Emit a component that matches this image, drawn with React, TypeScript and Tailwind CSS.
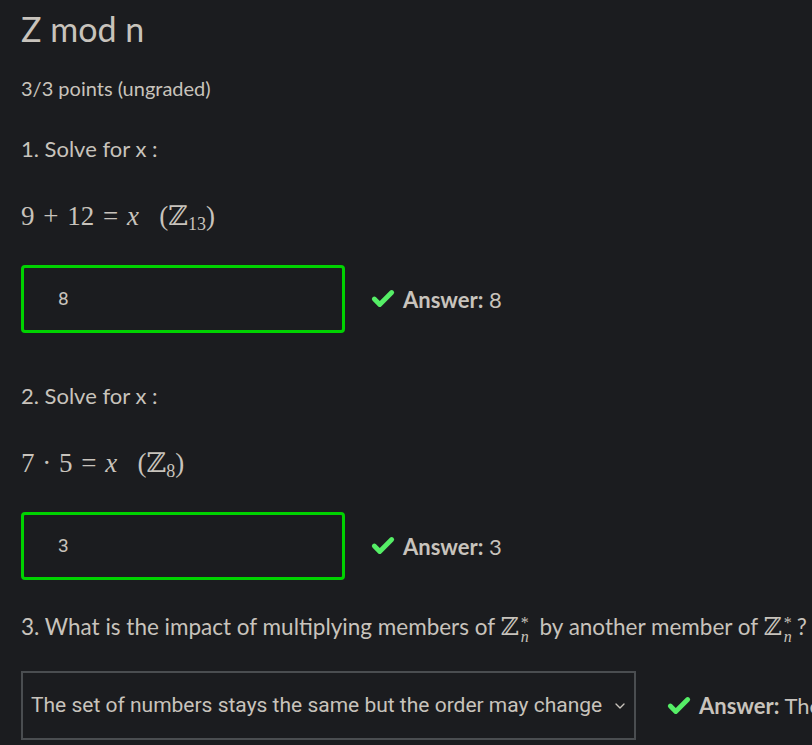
import { Check, ChevronDown } from "lucide-react";

const serif = { fontFamily: '"Liberation Serif", "DejaVu Serif", serif' };

function Zn({ sub, star }: { sub: string; star?: boolean }) {
  return (
    <span className="inline-flex items-baseline">
      <span style={{ fontFamily: '"DejaVu Serif", serif' }} className="font-light">ℤ</span>
      {star ? (
        <span className="relative ml-[2px] inline-block h-[1em] w-[13px] align-baseline text-[16px] leading-none">
          <span className="absolute -top-[4px] left-0">*</span>
          <span className="absolute top-[10px] left-0 italic">{sub}</span>
        </span>
      ) : (
        <span className="relative top-[5px] text-[18px]">{sub}</span>
      )}
    </span>
  );
}

function Answer({ value }: { value: string }) {
  return (
    <div className="flex items-center gap-[7px] text-[22px] whitespace-nowrap">
      <Check className="h-[26px] w-[26px] text-[#55ee66]" strokeWidth={4.5} />
      <span>
        <b className="font-bold">Answer:</b> {value}
      </span>
    </div>
  );
}

function NumberQuestion({ n, math, value }: { n: number; math: React.ReactNode; value: string }) {
  return (
    <div>
      <p className="text-[22px] leading-[26px]">{n}. Solve for x :</p>
      <div className="mt-[38px] text-[27px] leading-[32px]" style={serif}>
        {math}
      </div>
      <div className="mt-[30px] flex items-center gap-[25px]">
        <div className="flex h-[68px] w-[324px] items-center rounded-[4px] border-[3px] border-[#00d200] pl-[34px] text-[19px]" style={{ fontFamily: "Roboto, sans-serif" }}>
          {value}
        </div>
        <Answer value={value} />
      </div>
    </div>
  );
}

export default function App() {
  return (
    <div
      className="h-[745px] overflow-hidden bg-[#1b1c1f] pl-[21px] pt-[8px] text-[#c8c3bc]"
      style={{ fontFamily: '"Source Sans Pro", Lato, "Noto Sans", sans-serif' }}
    >
      <h1 className="text-[34px] leading-[42px]">Z mod n</h1>
      <p className="mt-[26px] text-[20px] leading-[24px]">3/3 points (ungraded)</p>
      <div className="mt-[36px]">
        <NumberQuestion
          n={1}
          value="8"
          math={
            <span className="whitespace-pre">
              9 <span className="mx-[2px]">+</span> 12 <span className="mx-[2px]">=</span> <i>x</i>{"   "}(<Zn sub="13" />)
            </span>
          }
        />
      </div>
      <div className="mt-[50px]">
        <NumberQuestion
          n={2}
          value="3"
          math={
            <span className="whitespace-pre">
              7 <span className="mx-[1px]">·</span> 5 <span className="mx-[2px]">=</span> <i>x</i>{"   "}(<Zn sub="8" />)
            </span>
          }
        />
      </div>
      <p className="mt-[34px] whitespace-nowrap text-[22.5px] leading-[26px]">
        3. What is the impact of multiplying members of{" "}
        <span className="text-[25px]" style={serif}>
          <Zn sub="n" star />
        </span>{" "}
        by another member of{" "}
        <span className="text-[25px]" style={serif}>
          <Zn sub="n" star />
        </span>
        ?
      </p>
      <div className="mt-[31px] flex items-center gap-[30px]">
        <div
          className="flex h-[69px] w-[615px] shrink-0 items-center gap-[10px] border-[2px] border-[#4a4d50] pl-[8px] text-[21px]"
          style={{ fontFamily: "Roboto, sans-serif" }}
        >
          <span className="whitespace-nowrap">The set of numbers stays the same but the order may change</span>
          <ChevronDown className="h-[16px] w-[16px] shrink-0" strokeWidth={2} />
        </div>
        <Answer value="The set of numbers stays the same but the order may change" />
      </div>
    </div>
  );
}
